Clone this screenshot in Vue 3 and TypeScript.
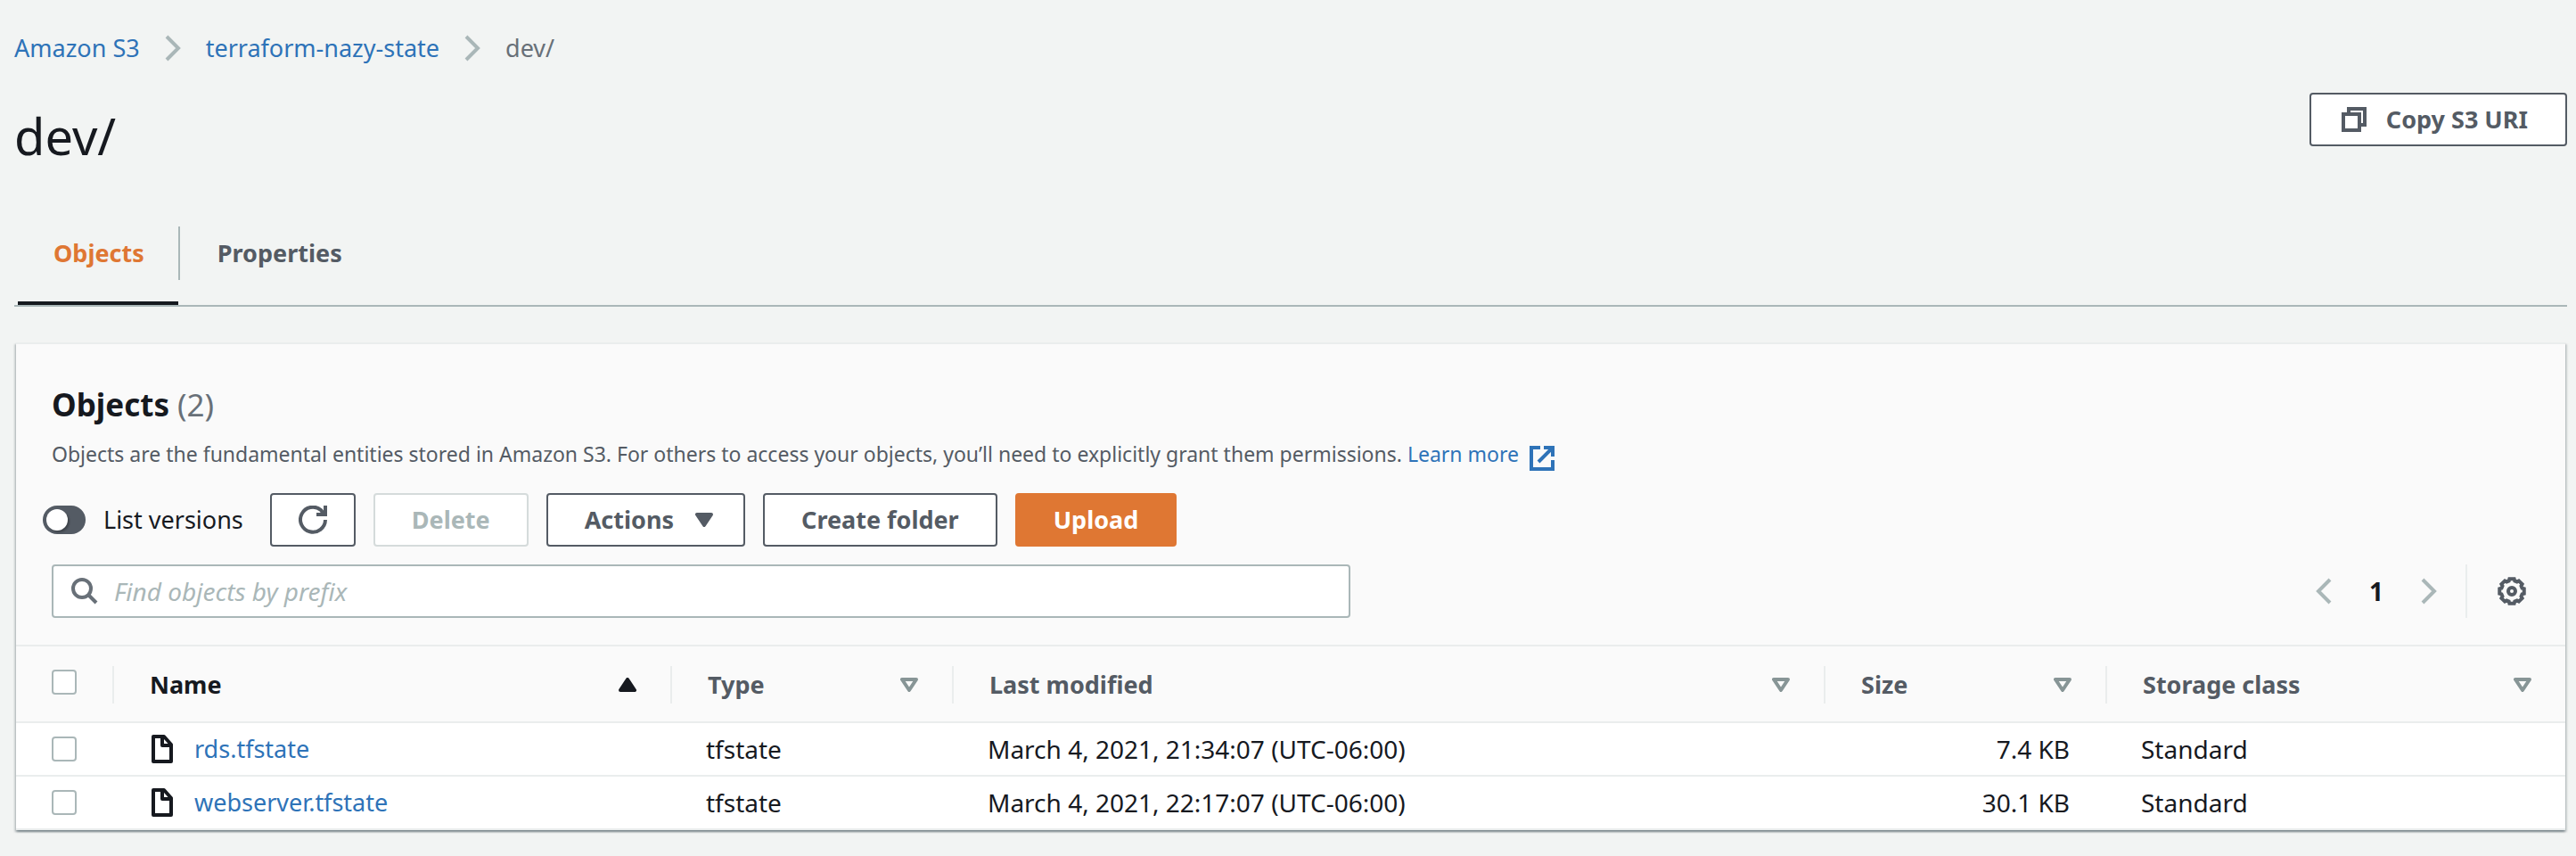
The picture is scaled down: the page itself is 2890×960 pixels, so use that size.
<script setup lang="ts">
import { ref } from 'vue'

interface Column {
  key: string
  label: string
  sorted?: boolean
}

interface S3Object {
  name: string
  type: string
  modified: string
  size: string
  storage: string
  selected: boolean
}

const columns: Column[] = [
  { key: 'name', label: 'Name', sorted: true },
  { key: 'type', label: 'Type' },
  { key: 'modified', label: 'Last modified' },
  { key: 'size', label: 'Size' },
  { key: 'storage', label: 'Storage class' },
]

const objects = ref<S3Object[]>([
  { name: 'rds.tfstate', type: 'tfstate', modified: 'March 4, 2021, 21:34:07 (UTC-06:00)', size: '7.4 KB', storage: 'Standard', selected: false },
  { name: 'webserver.tfstate', type: 'tfstate', modified: 'March 4, 2021, 22:17:07 (UTC-06:00)', size: '30.1 KB', storage: 'Standard', selected: false },
])

const listVersions = ref(false)
const allSelected = ref(false)
const query = ref('')

function toggleAll() {
  objects.value.forEach((o) => (o.selected = allSelected.value))
}

// Outline of a cog with eight flat teeth, centred in a 32 unit box.
function cogPath(): string {
  const points: string[] = []
  for (let tooth = 0; tooth < 8; tooth++) {
    const steps: [number, number][] = [[-16, 12], [-11, 14], [11, 14], [16, 12]]
    for (const [offset, radius] of steps) {
      const angle = ((tooth * 45 + offset) * Math.PI) / 180
      points.push(`${(16 + radius * Math.sin(angle)).toFixed(2)} ${(16 - radius * Math.cos(angle)).toFixed(2)}`)
    }
  }
  return `M${points.join('L')}Z`
}
const cog = cogPath()
</script>

<template>
  <main class="page">
    <nav class="breadcrumbs" aria-label="Breadcrumbs">
      <a href="#">Amazon S3</a>
      <svg class="chevron" width="18" height="30" viewBox="0 0 18 30" aria-hidden="true"><path d="M2 2L15 15L2 28" /></svg>
      <a href="#">terraform-nazy-state</a>
      <svg class="chevron" width="18" height="30" viewBox="0 0 18 30" aria-hidden="true"><path d="M2 2L15 15L2 28" /></svg>
      <span>dev/</span>
    </nav>

    <header class="title-row">
      <h1>dev/</h1>
      <button type="button" class="btn copy">
        <svg width="28" height="28" viewBox="0 0 28 28" aria-hidden="true"><path d="M2 8H20V26H2ZM8 8V2H26V20H20" /></svg>
        Copy S3 URI
      </button>
    </header>

    <div class="tabs" role="tablist">
      <button type="button" role="tab" class="tab active" aria-selected="true">Objects</button>
      <span class="tab-divider"></span>
      <button type="button" role="tab" class="tab" aria-selected="false">Properties</button>
    </div>

    <section class="panel">
      <div class="panel-head">
        <h2>Objects <span>(2)</span></h2>
        <p class="description">
          Objects are the fundamental entities stored in Amazon S3. For others to access your objects, you’ll need to explicitly grant them permissions.
          <a href="#">Learn more<svg width="28" height="28" viewBox="0 0 28 28" aria-hidden="true"><path d="M12 2H2V26H26V16M16 2H26V12M25 3L10 18" /></svg></a>
        </p>

        <div class="actions">
          <label class="versions">
            <input v-model="listVersions" type="checkbox" role="switch" class="switch" />
            List versions
          </label>
          <button type="button" class="btn refresh" aria-label="Refresh">
            <svg width="32" height="32" viewBox="0 0 32 32" aria-hidden="true"><path d="M30 16A14 14 0 1 1 25 5L28 9M30 0V10H20" /></svg>
          </button>
          <button type="button" class="btn" disabled>Delete</button>
          <button type="button" class="btn menu">
            Actions
            <svg width="20" height="16" viewBox="0 0 20 16" aria-hidden="true"><path class="solid" d="M2 2H18L10 14Z" /></svg>
          </button>
          <button type="button" class="btn">Create folder</button>
          <button type="button" class="btn primary">Upload</button>
        </div>

        <div class="filter-row">
          <label class="search">
            <svg width="30" height="30" viewBox="0 0 30 30" aria-hidden="true"><circle cx="12" cy="12" r="10" /><path d="M19 19L28 28" /></svg>
            <input v-model="query" type="text" placeholder="Find objects by prefix" aria-label="Find objects by prefix" />
          </label>
          <div class="paging">
            <button type="button" class="icon-btn" aria-label="Previous page">
              <svg class="chevron" width="18" height="30" viewBox="0 0 18 30" aria-hidden="true"><path d="M16 2L3 15L16 28" /></svg>
            </button>
            <button type="button" class="icon-btn page-number">1</button>
            <button type="button" class="icon-btn" aria-label="Next page">
              <svg class="chevron" width="18" height="30" viewBox="0 0 18 30" aria-hidden="true"><path d="M2 2L15 15L2 28" /></svg>
            </button>
            <span class="paging-divider"></span>
            <button type="button" class="icon-btn settings" aria-label="Preferences">
              <svg width="32" height="32" viewBox="0 0 32 32" aria-hidden="true"><path :d="cog" /><circle cx="16" cy="16" r="4" /></svg>
            </button>
          </div>
        </div>
      </div>

      <table>
        <colgroup>
          <col class="col-check" />
          <col v-for="c in columns" :key="c.key" :class="`col-${c.key}`" />
        </colgroup>
        <thead>
          <tr>
            <th scope="col" class="check">
              <div class="head-cell"><input v-model="allSelected" type="checkbox" class="box" aria-label="Select all objects" @change="toggleAll" /></div>
            </th>
            <th v-for="c in columns" :key="c.key" scope="col" :class="{ sorted: c.sorted }">
              <div class="head-cell">
                <span>{{ c.label }}</span>
                <svg width="20" height="16" viewBox="0 0 20 16" aria-hidden="true">
                  <path v-if="c.sorted" class="solid" d="M10 2L18 14H2Z" />
                  <path v-else class="hollow" d="M2 2H18L10 14Z" />
                </svg>
              </div>
            </th>
          </tr>
        </thead>
        <tbody>
          <tr v-for="o in objects" :key="o.name">
            <td class="check"><input v-model="o.selected" type="checkbox" class="box" :aria-label="`Select ${o.name}`" /></td>
            <td>
              <a href="#" class="file">
                <svg width="24" height="32" viewBox="0 0 24 32" aria-hidden="true"><path d="M2 2H14L22 11V30H2ZM12 2V12H22" /></svg>
                {{ o.name }}
              </a>
            </td>
            <td>{{ o.type }}</td>
            <td>{{ o.modified }}</td>
            <td class="size">{{ o.size }}</td>
            <td>{{ o.storage }}</td>
          </tr>
        </tbody>
      </table>
    </section>
  </main>
</template>

<style>
body {
  margin: 0;
  background: #f2f4f3;
}
</style>

<style scoped>
* {
  box-sizing: border-box;
}

.page {
  padding: 32px 10px 28px 16px;
  font-family: 'Noto Sans', 'Open Sans', sans-serif;
  font-size: 28px;
  line-height: 44px;
  color: #16191f;
}

a {
  color: #2e73b8;
  text-decoration: none;
}

svg {
  flex: none;
  fill: none;
  stroke: currentColor;
  stroke-width: 4;
}

.solid {
  fill: currentColor;
  stroke-linejoin: round;
}

.hollow {
  stroke: #879596;
  stroke-linejoin: round;
}

button,
input {
  font: inherit;
  color: inherit;
}

button {
  cursor: pointer;
}

.breadcrumbs {
  display: flex;
  align-items: center;
  gap: 28px;
  color: #687078;
  font-size: 27px;
}

.chevron {
  color: #aab7b8;
}

.title-row {
  display: flex;
  align-items: flex-start;
  justify-content: space-between;
  margin-top: 28px;
}

h1 {
  margin: 10px 0 0;
  font-size: 56px;
  font-weight: 400;
  line-height: 76px;
}

.btn {
  display: flex;
  align-items: center;
  justify-content: center;
  height: 60px;
  padding: 0 41px;
  border: 2px solid #545b64;
  border-radius: 4px;
  background: #fff;
  color: #545b64;
  font-size: 27px;
  font-weight: 700;
  white-space: nowrap;
}

.btn:disabled {
  border-color: #d5dbdb;
  color: #aab7b8;
  cursor: default;
}

.btn.primary {
  border-color: #df7733;
  background: #df7733;
  color: #fff;
}

.copy {
  gap: 22px;
  padding: 0 42px 0 34px;
}

.menu {
  gap: 24px;
  padding-right: 34px;
}

.refresh {
  padding: 0 30px;
}

.tabs {
  display: flex;
  align-items: flex-start;
  height: 90px;
  margin-top: 64px;
  padding-left: 4px;
  border-bottom: 2px solid #aab7b8;
}

.tab {
  height: 88px;
  padding: 0 38px 24px 40px;
  border: 0;
  border-bottom: 4px solid transparent;
  background: none;
  color: #545b64;
  font-size: 27px;
  font-weight: 700;
}

.tab.active {
  border-bottom-color: #16191f;
  color: #df7733;
}

.tab-divider {
  width: 2px;
  height: 60px;
  margin-right: 2px;
  background: #aab7b8;
}

.panel {
  margin: 40px 2px 0;
  border-top: 2px solid #eaeded;
  background: #fff;
  box-shadow:
    0 2px 2px rgba(0, 28, 36, 0.3),
    2px 2px 2px rgba(0, 28, 36, 0.15),
    -2px 2px 2px rgba(0, 28, 36, 0.15);
}

.panel-head {
  padding: 46px 40px 30px;
  background: #fafafa;
}

h2 {
  margin: 0;
  font-size: 35px;
  font-weight: 700;
  line-height: 44px;
}

h2 span {
  color: #687078;
  font-weight: 400;
}

.description {
  margin: 15px 0 0;
  color: #545b64;
  font-size: 23px;
  line-height: 36px;
}

.description svg {
  margin-left: 12px;
  vertical-align: -10px;
}

.actions {
  display: flex;
  align-items: center;
  gap: 20px;
  margin: 25px 0 20px -10px;
}

.versions {
  display: flex;
  align-items: center;
  gap: 20px;
  margin-right: 10px;
  font-size: 27px;
}

.switch {
  display: flex;
  align-items: center;
  appearance: none;
  width: 48px;
  height: 32px;
  margin: 0;
  padding: 0 4px;
  border-radius: 16px;
  background: #545b64;
}

.switch::before {
  content: '';
  width: 24px;
  height: 24px;
  border-radius: 50%;
  background: #fff;
  box-shadow: 2px 2px 2px rgba(0, 0, 0, 0.25);
}

.switch:checked {
  justify-content: flex-end;
}

.filter-row {
  display: flex;
  align-items: center;
  justify-content: space-between;
}

.search {
  display: flex;
  align-items: center;
  gap: 18px;
  width: 52.4%;
  height: 60px;
  padding: 0 20px;
  border: 2px solid #aab7b8;
  border-radius: 4px;
  background: #fff;
  color: #687078;
}

.search input {
  flex: 1;
  min-width: 0;
  padding: 0;
  border: 0;
  outline: 0;
  background: none;
  color: #16191f;
}

.search input::placeholder {
  color: #aab7b8;
  font-style: italic;
  opacity: 1;
}

.paging {
  display: flex;
  align-items: center;
}

.icon-btn {
  display: flex;
  align-items: center;
  justify-content: center;
  height: 60px;
  padding: 0;
  border: 0;
  background: none;
}

.page-number {
  width: 100px;
  font-weight: 700;
}

.paging-divider {
  width: 2px;
  height: 60px;
  margin: 0 34px 0 32px;
  background: #eaeded;
}

.settings {
  margin-right: 4px;
  color: #545b64;
}

table {
  width: 100%;
  table-layout: fixed;
  border-collapse: separate;
  border-spacing: 0;
}

.col-check {
  width: 110px;
}

.col-name {
  width: 626px;
}

.col-type,
.col-size {
  width: 316px;
}

.col-storage {
  width: 514px;
}

th {
  padding: 22px 0 20px;
  border-top: 2px solid #eaeded;
  border-bottom: 2px solid #eaeded;
  background: #fafafa;
  color: #545b64;
  font-size: 27px;
  font-weight: 700;
  text-align: left;
}

th.sorted {
  color: #16191f;
}

.head-cell {
  display: flex;
  align-items: center;
  justify-content: space-between;
  height: 42px;
  padding: 0 38px 0 40px;
  border-right: 2px solid #eaeded;
}

th.check .head-cell {
  align-items: flex-start;
  padding-top: 4px;
}

th:last-child .head-cell {
  border-right: 0;
}

td {
  height: 60px;
  padding: 0 42px 0 38px;
  border-bottom: 2px solid #eaeded;
}

td.check {
  padding: 0 40px;
}

.size {
  text-align: right;
}

.box {
  display: block;
  appearance: none;
  width: 28px;
  height: 28px;
  margin: 0;
  border: 2px solid #aab7b8;
  border-radius: 4px;
  background: #fff;
}

.box:checked,
.switch:checked {
  background: #2e73b8;
}

.file {
  display: flex;
  align-items: center;
  gap: 24px;
  padding-left: 4px;
  font-size: 27px;
}

.file svg {
  color: #16191f;
  stroke-linejoin: round;
}
</style>
